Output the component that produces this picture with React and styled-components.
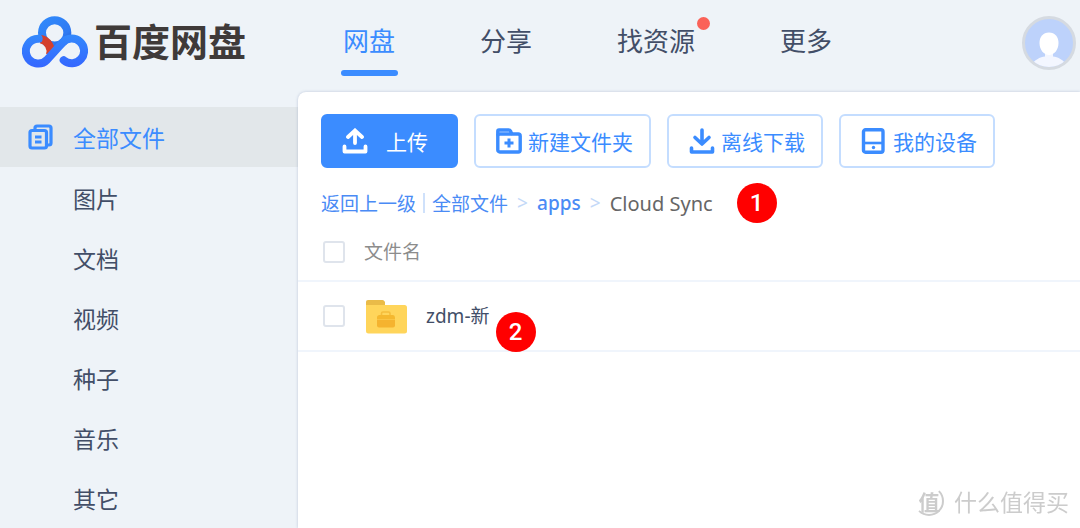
import React, {useState} from 'react';
import styled, {createGlobalStyle} from 'styled-components';

const BLUE = '#3b8cff';

const GlobalStyle = createGlobalStyle`
  * {
    box-sizing: border-box;
  }

  body {
    margin: 0;
    background: #eef3f8;
    color: #424e67;
    font-family: "Noto Sans", "Noto Sans CJK SC", sans-serif;
  }
`;

const Page = styled.div`
  display: flex;
  flex-direction: column;
  min-height: 100vh;
`;

const Header = styled.header`
  display: flex;
  height: 92px;
`;

const Brand = styled.a`
  display: flex;
  flex: 0 0 298px;
  align-items: center;
  gap: 6px;
  height: 83px;
  padding-left: 22px;
  color: #3f3a39;
  font-size: 38px;
  font-weight: 700;
  line-height: 44px;
  font-family: "Noto Sans CJK SC", sans-serif;
  text-decoration: none;
`;

const BrandName = styled.span`
  padding-bottom: 4px;
`;

const Nav = styled.nav`
  display: flex;
  flex: 1;
  align-items: flex-start;
  gap: 85px;
  padding: 21px 0 0 45px;
`;

const NavLink = styled.a`
  position: relative;
  color: ${(props) => (props.$active ? BLUE : '#424e67')};
  font-family: "Noto Sans CJK SC", sans-serif;
  font-size: 26px;
  line-height: 38px;
  text-decoration: none;
  white-space: nowrap;

  &::after {
    content: '';
    display: ${(props) => (props.$active ? 'block' : 'none')};
    position: absolute;
    right: -3px;
    bottom: -17px;
    left: -2px;
    height: 6px;
    border-radius: 3px;
    background: ${BLUE};
  }
`;

const Dot = styled.span`
  position: absolute;
  top: -4px;
  right: -15px;
  width: 13px;
  height: 13px;
  border-radius: 50%;
  background: #fa6258;
`;

const AvatarButton = styled.button`
  align-self: flex-start;
  width: 54px;
  height: 54px;
  margin: 16px 4px 0 0;
  padding: 0;
  border: 3px solid #d5dae1;
  border-radius: 50%;
  overflow: hidden;
  background: #bdd2fb;

  svg {
    display: block;
  }
`;

const Body = styled.div`
  display: flex;
  flex: 1;
`;

const Sidebar = styled.aside`
  flex: 0 0 298px;
  padding-top: 15px;
`;

const SideLink = styled.a`
  display: flex;
  align-items: center;
  gap: 20px;
  height: 60px;
  padding-bottom: 1px;
  margin-bottom: ${(props) => (props.$active ? '1px' : '0')};
  padding-left: ${(props) => (props.$active ? '28px' : '73px')};
  background: ${(props) => (props.$active ? '#e2e7ea' : 'transparent')};
  color: ${(props) => (props.$active ? BLUE : '#424e67')};
  font-family: "Noto Sans CJK SC", sans-serif;
  font-size: 23px;
  line-height: 34px;
  text-decoration: none;
`;

const Main = styled.main`
  flex: 1;
  min-width: 0;
  padding-top: 22px;
  border-radius: 8px 0 0 0;
  background: #ffffff;
  box-shadow: 0 0 3px rgba(90, 110, 160, 0.35);
`;

const Toolbar = styled.div`
  display: flex;
  gap: 16px;
  padding-left: 23px;
`;

const Button = styled.button`
  display: flex;
  align-items: center;
  gap: ${(props) => (props.$primary ? '18px' : '6px')};
  height: 54px;
  padding: ${(props) => (props.$primary ? '0 28px 0 19px' : '0 16px 0 20px')};
  border: 2px solid ${(props) => (props.$primary ? BLUE : '#c4ddff')};
  border-radius: 6px;
  background: ${(props) => (props.$primary ? BLUE : '#ffffff')};
  color: ${(props) => (props.$primary ? '#ffffff' : BLUE)};
  font-family: "Noto Sans CJK SC", sans-serif;
  font-size: 21px;
  line-height: 30px;
  white-space: nowrap;
`;

const Crumbs = styled.nav`
  display: flex;
  align-items: center;
  height: 40px;
  margin-top: 15px;
  padding-left: 23px;
  font-size: 19px;
  white-space: nowrap;
`;

const CrumbLink = styled.a`
  color: #4a8bf5;
  font-weight: ${(props) => (props.$strong ? 500 : 400)};
  text-decoration: none;
`;

const Bar = styled.span`
  width: 2px;
  height: 20px;
  margin: 0 7px;
  background: #cfe1fb;
`;

const Arrow = styled.span`
  width: 29px;
  color: #c4d9f8;
  text-align: center;
`;

const Current = styled.span`
  color: #666666;
  font-size: 20px;
`;

const Badge = styled.span`
  display: flex;
  align-items: center;
  justify-content: center;
  width: 40px;
  height: 40px;
  border-radius: 50%;
  background: #ff0000;
  color: #ffffff;
  font-family: Roboto, sans-serif;
  font-size: 24px;
  font-weight: 500;
  line-height: 28px;
`;

const CrumbBadge = styled(Badge)`
  margin-left: 24px;
`;

const RowBadge = styled(Badge)`
  position: absolute;
  top: 10px;
  left: calc(100% + 6px);
`;

const Table = styled.table`
  width: 100%;
  border-collapse: collapse;
  font-size: 19px;
  line-height: 28px;
  text-align: left;
`;

const Cell = styled.td`
  height: ${(props) => (props.$head ? '58px' : '70px')};
  padding: 0;
  border-bottom: 2px solid #f0f5fc;
  color: ${(props) => (props.$head ? '#8c8c8c' : '#424e67')};
  font-weight: 400;
`;

const CheckCell = styled(Cell)`
  width: 66px;
  padding-left: 25px;
`;

const Checkbox = styled.input.attrs({type: 'checkbox'})`
  display: block;
  appearance: none;
  width: 22px;
  height: 22px;
  margin: 0;
  border: 2px solid #dfe4ec;
  border-radius: 3px;
  background: #ffffff;

  &:checked {
    border-color: ${BLUE};
    background: ${BLUE};
  }
`;

const FileName = styled.div`
  display: flex;
  align-items: center;
  gap: 19px;
  padding-left: 2px;
`;

const FileLabel = styled.label`
  position: relative;
`;

const Watermark = styled.div`
  position: fixed;
  right: 11px;
  bottom: 10px;
  display: flex;
  align-items: center;
  gap: 10px;
  color: #cccccc;
  font-family: "Noto Sans CJK SC", sans-serif;
  font-size: 23px;
  line-height: 34px;
`;

const Seal = styled.span`
  display: flex;
  align-items: center;
  justify-content: center;
  width: 30px;
  height: 30px;
  border: 2px solid #cccccc;
  border-top-color: transparent;
  border-left-color: transparent;
  border-radius: 50%;
  font-size: 21px;
  font-weight: 700;
`;

const LogoIcon = () => (
  <svg width="66" height="53" viewBox="66 44 198 158" fill="none" aria-hidden="true">
    <defs>
      <linearGradient id="ring" x1="130" y1="50" x2="200" y2="140" gradientUnits="userSpaceOnUse">
        <stop offset="0" stopColor="#3089fb"/>
        <stop offset="0.7" stopColor="#2f7af2"/>
        <stop offset="1" stopColor="#2458cc"/>
      </linearGradient>
      <linearGradient id="loop" x1="0" y1="104" x2="0" y2="200" gradientUnits="userSpaceOnUse">
        <stop offset="0" stopColor="#3388fc"/>
        <stop offset="1" stopColor="#3567ff"/>
      </linearGradient>
    </defs>
    <circle cx="164" cy="97" r="38" stroke="url(#ring)" strokeWidth="24"/>
    <path d="M122 116A37 37 0 0 1 150 164" stroke="#d4402e" strokeWidth="25"/>
    <path
      d="M116 115A37 37 0 1 0 141 178L188 126A37 37 0 1 1 191 179"
      stroke="url(#loop)"
      strokeWidth="24"
      strokeLinecap="round"
      strokeLinejoin="round"
    />
  </svg>
);

const AvatarIcon = () => (
  <svg width="48" height="48" viewBox="0 0 48 48" aria-hidden="true">
    <path d="M4 50C8 41 15 38 20 37.500V34H28V37.500C33 38 40 41 44 50Z" fill="#f3f6ff"/>
    <path d="M24 13.500C30 13.500 33.500 18 33.500 24C33.500 31 29 36 24 36S14.500 31 14.500 24C14.500 18 18 13.500 24 13.500Z" fill="#ffffff"/>
  </svg>
);

const FilesIcon = () => (
  <svg width="25" height="26" viewBox="0 0 25 26" fill="none" stroke="currentColor" strokeWidth="3.200" aria-hidden="true">
    <path d="M7 5V4Q7 2 9 2H21Q23 2 23 4V19Q23 21 21 21H19.500"/>
    <rect x="2" y="6.500" width="16.500" height="17.500" rx="2"/>
    <path d="M7 13H13.500M7 18H13.500" strokeWidth="2.800"/>
  </svg>
);

const UploadIcon = () => (
  <svg width="26" height="26" viewBox="0 0 26 26" fill="none" stroke="currentColor" strokeWidth="3.800" aria-hidden="true">
    <path d="M13 15V3M6 9L13 2.500L20 9" strokeLinecap="round"/>
    <path d="M2.500 18.500V23.500H23.500V18.500" strokeLinejoin="round" strokeLinecap="round"/>
  </svg>
);

const NewFolderIcon = () => (
  <svg width="26" height="26" viewBox="0 0 26 26" fill="none" stroke="currentColor" strokeWidth="3.400" aria-hidden="true">
    <path d="M1.800 7V3.300Q1.800 2 3 2H12.500Q14 2 14.500 3L15.500 5.500" strokeLinecap="round"/>
    <rect x="1.800" y="6" width="22.400" height="18" rx="2"/>
    <path d="M13 10.500V19.500M8.500 15H17.500" strokeWidth="3"/>
  </svg>
);

const DownloadIcon = () => (
  <svg width="26" height="26" viewBox="0 0 26 26" fill="none" stroke="currentColor" strokeWidth="3.600" aria-hidden="true">
    <path d="M13 2V15M6 9.500L13 16L20 9.500" strokeLinecap="round" strokeLinejoin="round"/>
    <path d="M2.500 20V24H23.500V20" strokeLinejoin="round" strokeLinecap="round"/>
  </svg>
);

const DeviceIcon = () => (
  <svg width="26" height="26" viewBox="0 0 26 26" fill="none" stroke="currentColor" strokeWidth="3.400" aria-hidden="true">
    <rect x="2.500" y="1.800" width="19.500" height="22.400" rx="2"/>
    <path d="M3 15H22" strokeWidth="2.600"/>
    <circle cx="12.500" cy="19.500" r="1.700" fill="currentColor" stroke="none"/>
  </svg>
);

const FolderIcon = () => (
  <svg width="41" height="35" viewBox="0 0 41 35" aria-hidden="true">
    <path d="M0 9V2.500Q0 1 2 1H16.500Q18 1 19 3V9Z" fill="#eabb48"/>
    <path d="M0 6H38.500Q41 6 41 8.500V32Q41 34.500 38.500 34.500H2.500Q0 34.500 0 32Z" fill="#ffd55b"/>
    <path d="M15.500 17V14.500Q15.500 13 17 13H22.500Q24 13 24 14.500V17" fill="none" stroke="#f5bd3c" strokeWidth="1.600"/>
    <path d="M11 18.500Q11 16 13.500 16H27Q29 16 29 18.500V20H11Z" fill="#f5b82f"/>
    <path d="M11 20.500H29V26.500Q29 28.500 27 28.500H13Q11 28.500 11 26.500Z" fill="#f5b32f"/>
  </svg>
);

const CATEGORIES = ['图片', '文档', '视频', '种子', '音乐', '其它'];

const App = () => {
  const [checked, setChecked] = useState(false);
  const toggle = () => setChecked(!checked);

  return (
    <Page>
      <GlobalStyle/>
      <Header>
        <Brand href="#home">
          <LogoIcon/>
          <BrandName>百度网盘</BrandName>
        </Brand>
        <Nav>
          <NavLink href="#disk" $active>网盘</NavLink>
          <NavLink href="#share">分享</NavLink>
          <NavLink href="#find">找资源<Dot/></NavLink>
          <NavLink href="#more">更多</NavLink>
        </Nav>
        <AvatarButton type="button" aria-label="用户">
          <AvatarIcon/>
        </AvatarButton>
      </Header>
      <Body>
        <Sidebar>
          <SideLink href="#all" $active>
            <FilesIcon/>
            全部文件
          </SideLink>
          {CATEGORIES.map((name) => <SideLink key={name} href={`#${name}`}>{name}</SideLink>)}
        </Sidebar>
        <Main>
          <Toolbar>
            <Button type="button" $primary><UploadIcon/>上传</Button>
            <Button type="button"><NewFolderIcon/>新建文件夹</Button>
            <Button type="button"><DownloadIcon/>离线下载</Button>
            <Button type="button"><DeviceIcon/>我的设备</Button>
          </Toolbar>
          <Crumbs>
            <CrumbLink href="#back">返回上一级</CrumbLink>
            <Bar/>
            <CrumbLink href="#all">全部文件</CrumbLink>
            <Arrow>&gt;</Arrow>
            <CrumbLink href="#apps" $strong>apps</CrumbLink>
            <Arrow>&gt;</Arrow>
            <Current>Cloud Sync</Current>
            <CrumbBadge>1</CrumbBadge>
          </Crumbs>
          <Table>
            <thead>
              <tr>
                <CheckCell as="th" $head>
                  <Checkbox id="all-files" checked={checked} onChange={toggle}/>
                </CheckCell>
                <Cell as="th" $head scope="col">
                  <label htmlFor="all-files">文件名</label>
                </Cell>
              </tr>
            </thead>
            <tbody>
              <tr>
                <CheckCell>
                  <Checkbox id="file-zdm" checked={checked} onChange={toggle}/>
                </CheckCell>
                <Cell>
                  <FileName>
                    <FolderIcon/>
                    <FileLabel htmlFor="file-zdm">
                      zdm-新
                      <RowBadge>2</RowBadge>
                    </FileLabel>
                  </FileName>
                </Cell>
              </tr>
            </tbody>
          </Table>
        </Main>
      </Body>
      <Watermark>
        <Seal>值</Seal>
        什么值得买
      </Watermark>
    </Page>
  );
};

export default App;
